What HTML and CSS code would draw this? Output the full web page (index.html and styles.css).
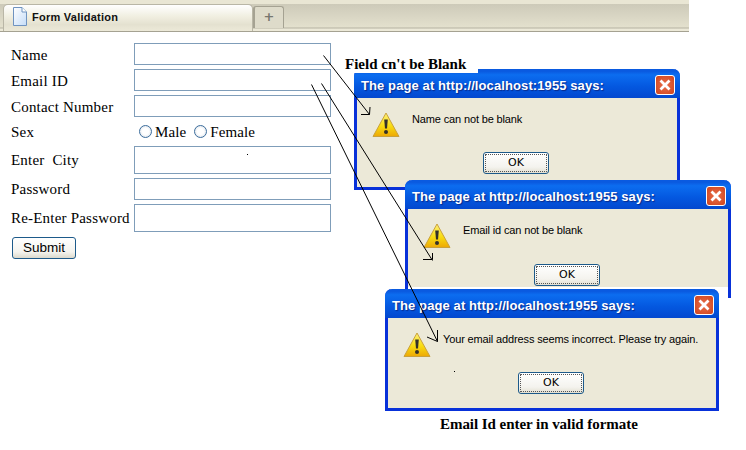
FILE: index.html
```html
<!DOCTYPE html>
<html lang="en">
<head>
  <meta charset="UTF-8">
  <title>Form Validation</title>
  <link rel="stylesheet" href="styles.css">
</head>
<body>
  <div class="tab-bar">
    <div class="tab">
      <svg class="tab-icon" width="14" height="19" viewBox="0 0 14 19">
        <defs>
          <linearGradient id="page-fill" x1="0" y1="0" x2="1" y2="1">
            <stop offset="0" stop-color="#fff"/>
            <stop offset="1" stop-color="#c4dcf8"/>
          </linearGradient>
          <linearGradient id="warn-fill" x1="0" y1="0" x2="0" y2="1">
            <stop offset="0" stop-color="#fdf07a"/>
            <stop offset=".55" stop-color="#f8dc10"/>
            <stop offset="1" stop-color="#eda806"/>
          </linearGradient>
        </defs>
        <path d="M.5 .5H9L13.5 5V18.5H.5Z" fill="url(#page-fill)" stroke="#6f93c0"/>
        <path d="M9 .5V5H13.5" fill="#fff" stroke="#6f93c0"/>
      </svg>
      <span>Form Validation</span>
    </div>
    <div class="new-tab">+</div>
  </div>

  <form class="form">
    <label class="row-label low">Name</label>
    <input class="field" type="text">
    <label class="row-label low">Email ID</label>
    <input class="field" type="text">
    <label class="row-label low">Contact Number</label>
    <input class="field" type="text">
    <label class="row-label low">Sex</label>
    <div class="sex-options">
      <span class="radio"></span><span class="radio-text">Male</span>
      <span class="radio"></span><span class="radio-text">Female</span>
    </div>
    <label class="row-label">Enter&nbsp; City</label>
    <input class="field tall" type="text">
    <label class="row-label">Password</label>
    <input class="field" type="text">
    <label class="row-label">Re-Enter Password</label>
    <input class="field tall" type="text">
    <button class="submit" type="button">Submit</button>
  </form>

  <div class="dialog dialog-name">
    <div class="dialog-title">
      <span>The page at http://localhost:1955 says:</span>
      <span class="close">
        <svg width="14" height="14" viewBox="0 0 14 14"><path d="M2.5 2.5L11.5 11.5M11.5 2.5L2.5 11.5" stroke="#fff" stroke-width="2.8"/></svg>
      </span>
    </div>
    <div class="dialog-body">
      <div class="message">
        <svg class="warn" width="28" height="26" viewBox="0 0 28 26">
          <path d="M14 1L27 24.5H1Z" fill="url(#warn-fill)" stroke="#c9a13c" stroke-linejoin="round"/>
          <path d="M12.2 7.5H15.8L15 16.5H13Z" fill="#33302a"/>
          <circle cx="14" cy="20" r="2" fill="#33302a"/>
        </svg>
        <span>Name can not be blank</span>
      </div>
      <div class="ok">OK</div>
    </div>
  </div>

  <div class="dialog dialog-email">
    <div class="dialog-title">
      <span>The page at http://localhost:1955 says:</span>
      <span class="close">
        <svg width="14" height="14" viewBox="0 0 14 14"><path d="M2.5 2.5L11.5 11.5M11.5 2.5L2.5 11.5" stroke="#fff" stroke-width="2.8"/></svg>
      </span>
    </div>
    <div class="dialog-body">
      <div class="message">
        <svg class="warn" width="28" height="26" viewBox="0 0 28 26">
          <path d="M14 1L27 24.5H1Z" fill="url(#warn-fill)" stroke="#c9a13c" stroke-linejoin="round"/>
          <path d="M12.2 7.5H15.8L15 16.5H13Z" fill="#33302a"/>
          <circle cx="14" cy="20" r="2" fill="#33302a"/>
        </svg>
        <span>Email id can not be blank</span>
      </div>
      <div class="ok">OK</div>
    </div>
  </div>

  <div class="dialog dialog-invalid">
    <div class="dialog-title">
      <span>The page at http://localhost:1955 says:</span>
      <span class="close">
        <svg width="14" height="14" viewBox="0 0 14 14"><path d="M2.5 2.5L11.5 11.5M11.5 2.5L2.5 11.5" stroke="#fff" stroke-width="2.8"/></svg>
      </span>
    </div>
    <div class="dialog-body">
      <div class="message">
        <svg class="warn" width="28" height="26" viewBox="0 0 28 26">
          <path d="M14 1L27 24.5H1Z" fill="url(#warn-fill)" stroke="#c9a13c" stroke-linejoin="round"/>
          <path d="M12.2 7.5H15.8L15 16.5H13Z" fill="#33302a"/>
          <circle cx="14" cy="20" r="2" fill="#33302a"/>
        </svg>
        <span>Your email address seems incorrect. Please try again.</span>
      </div>
      <div class="ok">OK</div>
    </div>
  </div>

  <div class="caption caption-blank">Field cn't be Blank</div>
  <div class="caption caption-invalid">Email Id enter in valid formate</div>

  <!-- hand drawn arrows over the whole shot -->
  <svg class="arrows" width="746" height="450" viewBox="0 0 746 450">
    <g fill="none" stroke="#000">
      <path d="M323.5 55.5L369.5 114.5M361 114.5H369.5L370 107"/>
      <path d="M321.5 83.5L432.5 260.5M423 259.5H432.5V253"/>
      <path d="M311.5 84.5L437.5 341.5M427 337L437.5 341.5V330"/>
      <path d="M247 154.5h1M454 371.5h1"/>
    </g>
  </svg>
</body>
</html>
```

FILE: styles.css
```css
body {
  margin: 0;
  width: 746px;
  height: 450px;
  overflow: hidden;
  position: relative;
  background: #fff;
  font-family: "Liberation Serif", serif;
  color: #000;
}

.tab-bar {
  width: 689px;
  height: 32px;
  box-sizing: border-box;
  display: flex;
  align-items: flex-end;
  padding-left: 3px;
  background: linear-gradient(#e9e6d4 4px, #cdcab9 4px, #e3e0cd 27px, #b5b2a2 28px, #ece9d8 29px);
  border-bottom: 1px solid #a5a292;
}

.tab {
  width: 250px;
  height: 27px;
  box-sizing: border-box;
  display: flex;
  align-items: center;
  gap: 5px;
  padding: 0 0 3px 9px;
  background: linear-gradient(#fff, #f0eee0 45%, #e4e1d0 75%, #ece9d8);
  border: 1px solid #b9b6a6;
  border-bottom: none;
  border-radius: 5px 5px 0 0;
  font: bold 11px "Liberation Sans", sans-serif;
  letter-spacing: .25px;
  color: #111;
}

.new-tab {
  width: 31px;
  height: 22px;
  box-sizing: border-box;
  margin-bottom: 3px;
  text-align: center;
  background: #dedbca;
  border: 2px solid #a5a292;
  border-width: 1px 1px 0 2px;
  border-radius: 3px 3px 0 0;
  font: bold 13px/20px "DejaVu Sans", sans-serif;
  color: #77776f;
}

.form {
  display: grid;
  grid-template-columns: 123px 197px;
  grid-template-rows: 22px 22px 22px 21px 28px 22px 28px 22px;
  row-gap: 4px;
  align-items: center;
  padding: 11px 0 0 11px;
  font-size: 15px;
  letter-spacing: .2px;
}

.row-label.low {
  padding-top: 2px;
}

.field {
  width: 197px;
  height: 100%;
  box-sizing: border-box;
  margin: 0;
  border: 1px solid #7f9db9;
  background: #fff;
}

.sex-options {
  display: flex;
  align-items: center;
  padding-left: 5px;
}

.radio {
  width: 13px;
  height: 13px;
  box-sizing: border-box;
  margin-right: 3px;
  border: 1px solid #3c6d9c;
  border-radius: 50%;
  background: radial-gradient(#fff 40%, #d3dbe4);
}

.radio-text {
  margin-right: 8px;
  padding-top: 2px;
  letter-spacing: .1px;
}

.submit {
  width: 64px;
  height: 22px;
  margin: 1px 0 0 1px;
  padding: 0;
  background: linear-gradient(#fff, #f4f3ee 70%, #dcd9cc);
  border: 1px solid #1d5a8a;
  border-radius: 3px;
  font: 13.5px "Liberation Sans", sans-serif;
  color: #000;
}

.dialog {
  position: absolute;
  box-sizing: border-box;
  display: flex;
  flex-direction: column;
  border: solid #0831d9;
  border-width: 0 3px 3px;
  border-radius: 7px 7px 0 0;
  background: #ece9d8;
}

.dialog-name {
  left: 354px;
  top: 69px;
  width: 326px;
  height: 121px;
}

/* bottom of this one was cut off in the shot, only the right edge goes on */
.dialog-email {
  left: 405px;
  top: 180px;
  width: 326px;
  height: 118px;
  border-bottom: 0;
  background: #fff;
}

.dialog-email .dialog-body {
  flex: none;
  height: 78px;
}

.dialog-invalid {
  left: 385px;
  top: 289px;
  width: 334px;
  height: 122px;
}

.dialog-title {
  height: 29px;
  box-sizing: border-box;
  flex: none;
  margin: 0 -3px;
  padding: 3px 5px 0 7px;
  display: flex;
  align-items: center;
  justify-content: space-between;
  border-radius: 7px 7px 0 0;
  background: linear-gradient(#0a5ae0, #0a5ae0 8%, #0c6df0 20%, #0458e0 60%, #0348cf);
  font: bold 13px "Liberation Sans", sans-serif;
  letter-spacing: .1px;
  color: #fff;
  text-shadow: 1px 1px 1px #0a2a8a;
}

.close {
  width: 20px;
  height: 20px;
  box-sizing: border-box;
  display: flex;
  align-items: center;
  justify-content: center;
  border: 1px solid #fff;
  border-radius: 3px;
  background: radial-gradient(#e8704c, #d0431c);
}

.dialog-body {
  flex: 1;
  display: flex;
  flex-direction: column;
  align-items: center;
  background: #ece9d8;
}

.message {
  align-self: stretch;
  height: 54px;
  box-sizing: border-box;
  display: flex;
  align-items: flex-start;
  gap: 12px;
  padding: 14px 0 0 15px;
  font: 11px "Liberation Sans", sans-serif;
  letter-spacing: -.14px;
  white-space: nowrap;
  color: #000;
}

.message span {
  margin-top: 1px;
}

.ok {
  width: 66px;
  height: 22px;
  box-sizing: border-box;
  margin-right: 2px;
  text-align: center;
  background: linear-gradient(#fff, #f4f3ee 70%, #e3e0d2);
  border: 1px solid #1d5a8a;
  border-radius: 3px;
  outline: 1px dotted #555;
  outline-offset: -3px;
  font: 11px/20px "DejaVu Sans", sans-serif;
}

.dialog-email .message {
  height: 55px;
}

.caption {
  position: absolute;
  background: #fff;
  font-weight: bold;
  font-size: 15px;
  line-height: 17px;
}

.caption-blank {
  left: 340px;
  top: 56px;
  width: 133px;
  height: 17px;
  padding-left: 5px;
}

.caption-invalid {
  left: 440px;
  top: 416px;
  letter-spacing: -.05px;
}

.arrows {
  position: absolute;
  left: 0;
  top: 0;
  pointer-events: none;
}
```
